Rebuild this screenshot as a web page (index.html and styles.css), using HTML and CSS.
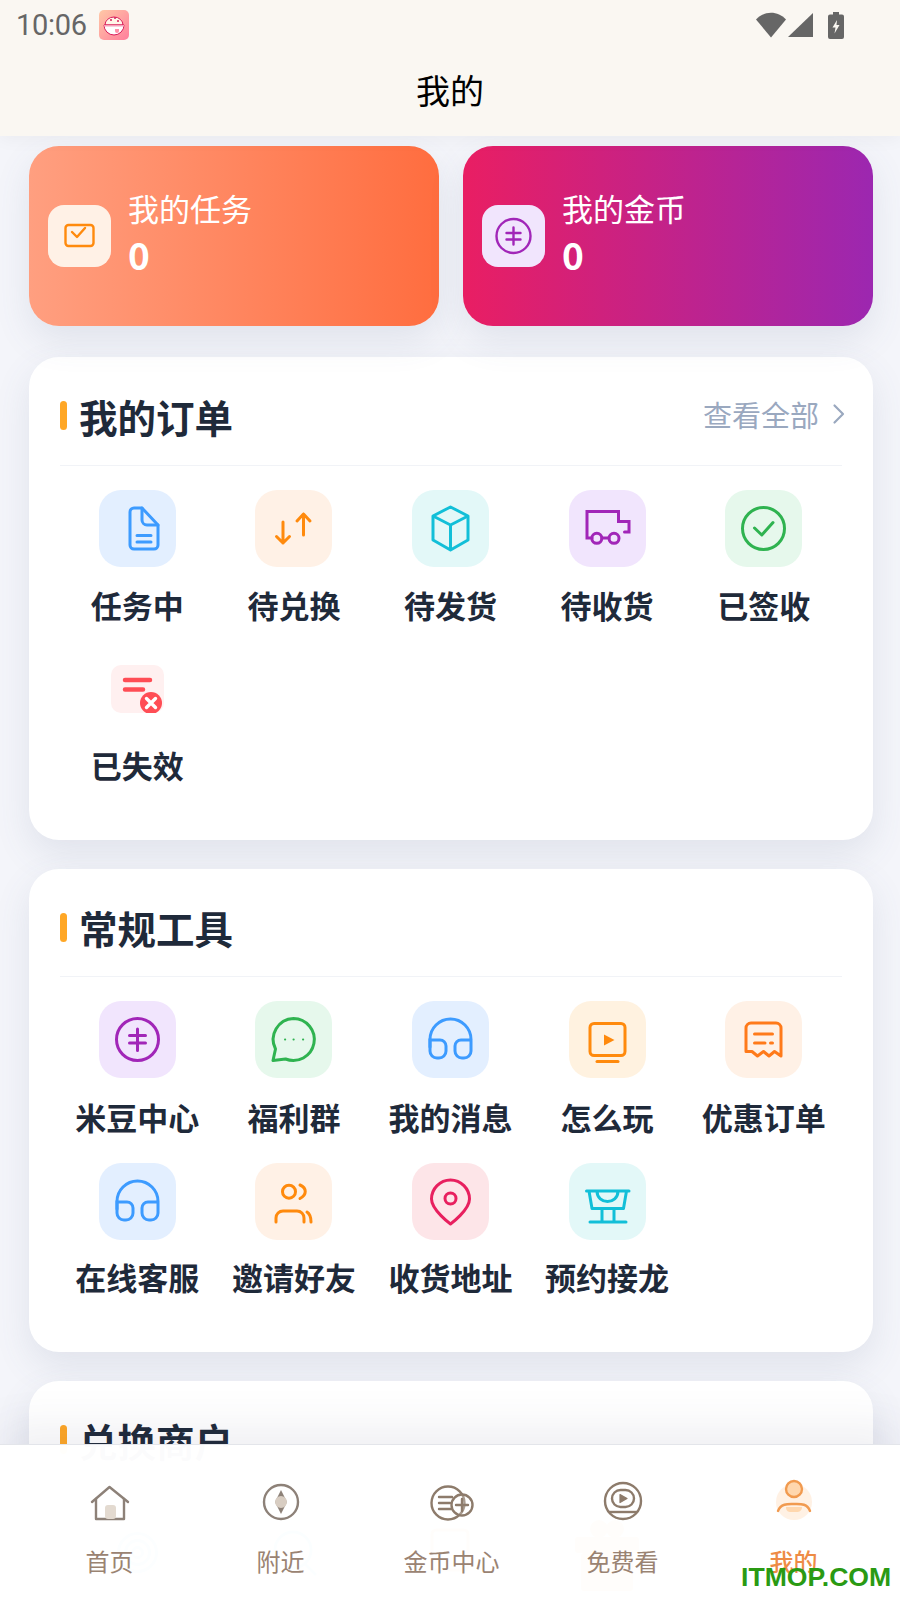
FILE: index.html
```html
<!DOCTYPE html>
<html lang="zh-CN">
<head>
    <meta charset="UTF-8">
    <meta name="viewport" content="width=device-width, initial-scale=1.0">
    <title>我的</title>
    <link rel="stylesheet" href="styles.css">
</head>
<body>
<div class="page">
    <header class="top">
        <div class="status">
            <span class="time">10:06</span>
            <svg class="app-icon" viewBox="0 0 30 30">
                <defs><linearGradient id="rice" x1="0" y1="0" x2="1" y2="1"><stop offset="0" stop-color="#ffc9a6"/><stop offset="1" stop-color="#ff7d9c"/></linearGradient></defs>
                <rect width="30" height="30" rx="5" fill="url(#rice)"/>
                <path d="M6 15a9 8 0 0 1 18 0Z" fill="#fff6e8" stroke="#d81e5b" stroke-width="1"/>
                <path d="M5 15H25a10 10 0 0 1-20 0Z" fill="#fff" stroke="#d81e5b" stroke-width="1"/>
                <rect x="5" y="15" width="20" height="1.5" fill="#f5a0b8"/>
                <path d="M16 19h4v2a2 2 0 0 1-4 0Z" fill="#ff8fa8"/>
                <circle cx="12" cy="10" r="1" fill="#d81e5b"/><circle cx="16" cy="8" r="1" fill="#d81e5b"/><circle cx="19" cy="11" r="1" fill="#d81e5b"/>
            </svg>
            <div class="sys">
                <svg width="30" height="26" viewBox="0 0 30 26"><path d="M0 7.5C8-1.5 22-1.500 30 7.500L15 25.500Z" fill="#666"/></svg>
                <svg width="26" height="26" viewBox="0 0 26 26"><path d="M25 1V25H0Z" fill="#666"/></svg>
                <svg class="batt" width="16" height="27" viewBox="0 0 16 27"><path d="M5 0h6v2.500h3a2 2 0 0 1 2 2V25a2 2 0 0 1-2 2H2a2 2 0 0 1-2-2V4.500a2 2 0 0 1 2-2h3Z" fill="#666"/><path d="M9 8L4.500 15.500H7.500L6.500 21.500L11.500 13H8.500Z" fill="#faf7f2"/></svg>
            </div>
        </div>
        <h1 class="page-title">我的</h1>
    </header>

    <div class="stats">
        <div class="stat stat-task">
            <span class="stat-icon bg-peach">
                <svg width="63" height="62" viewBox="0 0 63 62" fill="none" stroke="#ff8a0d" stroke-width="2.400"><rect x="17.500" y="20" width="28" height="21" rx="3"/><path d="M24 27l5 5 8-9" stroke-linecap="round" stroke-linejoin="round"/></svg>
            </span>
            <div class="stat-text"><span class="stat-name">我的任务</span><b class="stat-num">0</b></div>
        </div>
        <div class="stat stat-coin">
            <span class="stat-icon bg-purple">
                <svg width="63" height="62" viewBox="0 0 63 62" fill="none" stroke="#a126b8" stroke-width="2.400" stroke-linecap="round"><circle cx="31.500" cy="31" r="17"/><path d="M31.500 22.500V39.500M24.500 28H38.500M24.500 34.500H38.500"/></svg>
            </span>
            <div class="stat-text"><span class="stat-name">我的金币</span><b class="stat-num">0</b></div>
        </div>
    </div>

    <section class="card">
        <div class="card-head">
            <h2 class="card-title">我的订单</h2>
            <a class="more">查看全部
                <svg width="14" height="22" viewBox="0 0 14 22" fill="none" stroke="#9aa8bf" stroke-width="2.200" stroke-linecap="round" stroke-linejoin="round"><path d="M2.500 2.500L11 11L2.500 19.500"/></svg>
            </a>
        </div>
        <div class="items items-orders">
            <div class="item">
                <span class="ico bg-blue"><svg viewBox="0 0 77 77" fill="none" stroke="#3d9bff" stroke-linecap="round" stroke-linejoin="round"><path d="M35 18H43L59 35V55a4 4 0 0 1-4 4H35a4 4 0 0 1-4-4V22a4 4 0 0 1 4-4Z"/><path d="M43 18V30a5 5 0 0 0 5 5H59M38 45.500H52M38 52H52"/></svg></span>
                <span class="item-name">任务中</span>
            </div>
            <div class="item">
                <span class="ico bg-peach"><svg viewBox="0 0 77 77" fill="none" stroke="#ff8a0d" stroke-linecap="round" stroke-linejoin="round"><path d="M28 32V53M21.500 46.500L28 53L34.500 46.500M48.500 45V24M42 31L48.500 24L55 31"/></svg></span>
                <span class="item-name">待兑换</span>
            </div>
            <div class="item">
                <span class="ico bg-cyan"><svg viewBox="0 0 77 77" fill="none" stroke="#12bfd8" stroke-linejoin="round"><path d="M38.500 17L56 26V50L38.500 60L21 50V26Z"/><path d="M21 26L38.500 35L56 26M38.500 35V60"/></svg></span>
                <span class="item-name">待发货</span>
            </div>
            <div class="item">
                <span class="ico bg-purple"><svg viewBox="0 0 77 77" fill="none" stroke="#a126b8" stroke-linecap="round"><path d="M23 48H18V21.500H49.500V31.500H60V42H55.500M33 48H40"/><circle cx="27.800" cy="48.300" r="5"/><circle cx="45" cy="48.300" r="5"/></svg></span>
                <span class="item-name">待收货</span>
            </div>
            <div class="item">
                <span class="ico bg-green"><svg viewBox="0 0 77 77" fill="none" stroke="#2fb350" stroke-linecap="round" stroke-linejoin="round"><circle cx="38.500" cy="38.500" r="21"/><path d="M29.500 38L36.800 45L48 32.500"/></svg></span>
                <span class="item-name">已签收</span>
            </div>
            <div class="item">
                <span class="ico"><svg class="ico-small" width="53" height="48" viewBox="0 0 53 48"><rect width="53" height="48" rx="10" fill="#fff0f0"/><path d="M14 15H39M14 24.500H32" stroke="#ff4d55" stroke-width="4.500" stroke-linecap="round"/><circle cx="40" cy="38" r="11" fill="#ff4d55"/><path d="M35.500 33.500L44.500 42.500M44.500 33.500L35.500 42.500" stroke="#fff" stroke-width="3.400" stroke-linecap="round"/></svg></span>
                <span class="item-name">已失效</span>
            </div>
        </div>
    </section>

    <section class="card card-tools">
        <div class="card-head">
            <h2 class="card-title">常规工具</h2>
        </div>
        <div class="items">
            <div class="item">
                <span class="ico bg-purple"><svg viewBox="0 0 77 77" fill="none" stroke="#a126b8" stroke-linecap="round"><circle cx="38.500" cy="38.500" r="21"/><path d="M38.500 28V49.500M30.500 34.500H46.500M30.500 42H46.500"/></svg></span>
                <span class="item-name">米豆中心</span>
            </div>
            <div class="item">
                <span class="ico bg-green"><svg viewBox="0 0 77 77" fill="none" stroke="#2fb350" stroke-linejoin="round"><path d="M38.500 17.500A21 21 0 1 1 30.500 58L18 59.500L20.500 48A21 21 0 0 1 38.500 17.500Z"/><path d="M30 38.500H30.200M38.500 38.500H38.700M48 38.500H48.200" stroke-linecap="round" stroke-width="2"/></svg></span>
                <span class="item-name">福利群</span>
            </div>
            <div class="item">
                <span class="ico bg-blue"><svg viewBox="0 0 77 77" fill="none" stroke="#3d9bff" stroke-linecap="round"><path d="M18 46V38.500a20.500 20.500 0 0 1 41 0V50a7 7 0 0 1-7 7h-2a7 7 0 0 1-7-7V45a6 6 0 0 1 6-6H59"/><path d="M18 39H28a6 6 0 0 1 6 6V50a7 7 0 0 1-7 7H25a7 7 0 0 1-7-7Z"/></svg></span>
                <span class="item-name">我的消息</span>
            </div>
            <div class="item">
                <span class="ico bg-yellow"><svg viewBox="0 0 77 77" fill="none" stroke="#ff8a0d" stroke-linecap="round"><rect x="21" y="22.500" width="35" height="32" rx="4"/><path d="M28 60.500H49"/><path d="M35 33.500L45.500 39L35 44.500Z" fill="#ff8a0d" stroke="none"/></svg></span>
                <span class="item-name">怎么玩</span>
            </div>
            <div class="item">
                <span class="ico bg-peach"><svg viewBox="0 0 77 77" fill="none" stroke="#ff7a1a" stroke-linecap="round" stroke-linejoin="round"><path d="M21 50.500V27a5 5 0 0 1 5-5H51a5 5 0 0 1 5 5V55L49.500 50.500L44 55L38.500 50.500L32.500 55L27 50.500L21 50.500Z"/><path d="M29.500 33H47.500M29.500 42H40M45.500 42H47.500"/></svg></span>
                <span class="item-name">优惠订单</span>
            </div>
            <div class="item">
                <span class="ico bg-blue"><svg viewBox="0 0 77 77" fill="none" stroke="#3d9bff" stroke-linecap="round"><path d="M18 46V38.500a20.500 20.500 0 0 1 41 0V50a7 7 0 0 1-7 7h-2a7 7 0 0 1-7-7V45a6 6 0 0 1 6-6H59"/><path d="M18 39H28a6 6 0 0 1 6 6V50a7 7 0 0 1-7 7H25a7 7 0 0 1-7-7Z"/></svg></span>
                <span class="item-name">在线客服</span>
            </div>
            <div class="item">
                <span class="ico bg-peach"><svg viewBox="0 0 77 77" fill="none" stroke="#ff8a0d" stroke-linecap="round"><circle cx="34" cy="28.700" r="6.500"/><path d="M45 22C52 25 52 32 45 35.500M21 59V55a7 7 0 0 1 7-7H42a7 7 0 0 1 7 7V59M52 49C55 51 56 54 56 59"/></svg></span>
                <span class="item-name">邀请好友</span>
            </div>
            <div class="item">
                <span class="ico bg-rose"><svg viewBox="0 0 77 77" fill="none" stroke="#e8205f" stroke-linejoin="round"><path d="M38.500 61C38.500 61 19.500 47 19.500 36A19 19 0 0 1 57.500 36C57.500 47 38.500 61 38.500 61Z"/><circle cx="38.500" cy="35.500" r="5.500"/></svg></span>
                <span class="item-name">收货地址</span>
            </div>
            <div class="item">
                <span class="ico bg-cyan"><svg viewBox="0 0 77 77" fill="none" stroke="#12bfd8" stroke-linecap="round" stroke-linejoin="round"><path d="M17.500 28H60M20 28L23 45.500H54.500L57.500 28M28 28C28 42 49 42 49 28M33 45.500V59M45 45.500V59M21 59H57"/></svg></span>
                <span class="item-name">预约接龙</span>
            </div>
        </div>
    </section>

    <section class="card">
        <div class="card-head">
            <h2 class="card-title">兑换商户</h2>
        </div>
        <div class="items">
            <div class="item">
                <span class="ico"><svg viewBox="0 0 77 77" fill="none" stroke="#3d9bff"><circle cx="38.500" cy="38.500" r="19"/><circle cx="38.500" cy="38.500" r="12"/><circle cx="38.500" cy="38.500" r="5"/></svg></span>
            </div>
            <div class="item">
                <span class="ico"><svg viewBox="0 0 77 77" fill="none" stroke="#12bfd8"><circle cx="38" cy="36" r="18"/><path d="M50 50L61 61"/></svg></span>
            </div>
            <div class="item">
                <span class="ico"><svg viewBox="0 0 77 77" fill="none" stroke="#ff8a0d"><rect x="20" y="16" width="36" height="40" rx="4"/></svg></span>
            </div>
            <div class="item">
                <span class="ico"><svg class="ico-solid" viewBox="0 0 77 77" fill="#ff8a0d"><rect x="6" y="23" width="64" height="16" rx="3"/><rect x="12" y="39" width="52" height="38" rx="3"/><circle cx="30" cy="15" r="9"/><circle cx="46" cy="15" r="9"/></svg></span>
            </div>
        </div>
    </section>
</div>

<nav class="tabbar">
    <div class="tab">
        <svg width="40" height="36" viewBox="0 0 40 36" fill="none" stroke="#8d8178" stroke-width="2.400" stroke-linejoin="round" stroke-linecap="round"><path d="M2 17L19.500 2L38 17"/><path d="M6 14V34H34V14"/><rect x="15" y="20" width="11" height="14" rx="3" fill="#e3dad0" stroke="none"/></svg>
        <span>首页</span>
    </div>
    <div class="tab">
        <svg width="38" height="38" viewBox="0 0 38 38" fill="none" stroke="#8d8178" stroke-width="2.400"><circle cx="19" cy="19" r="17"/><path d="M19 7L25 19L19 31L13 19Z" fill="#8d8178" stroke="none"/><circle cx="19" cy="19" r="4.800" fill="#d8cdc2" stroke="#d8cdc2"/></svg>
        <span>附近</span>
    </div>
    <div class="tab">
        <svg width="44" height="36" viewBox="0 0 44 36" fill="none" stroke="#8d7b6b" stroke-width="2.400" stroke-linecap="round"><circle cx="18" cy="18" r="16.500"/><path d="M9 12H22M9 18H20M9 24H22"/><circle cx="32" cy="20" r="10.500" fill="#fff" fill-opacity=".25"/><path d="M32 14V26M26 20H38"/></svg>
        <span>金币中心</span>
    </div>
    <div class="tab">
        <svg width="40" height="40" viewBox="0 0 40 40" fill="none" stroke="#8d7b6b" stroke-width="2.400"><circle cx="20" cy="20" r="18"/><rect x="9" y="9" width="22" height="17" rx="8.500"/><path d="M17 13.500L24 17.500L17 21.500Z" fill="#8d7b6b" stroke="#8d7b6b" stroke-width="1.200" stroke-linejoin="round"/><path d="M6 31H34"/></svg>
        <span>免费看</span>
    </div>
    <div class="tab tab-on">
        <svg width="38" height="42" viewBox="0 0 38 42" fill="none"><circle cx="19" cy="23" r="18" fill="#fff1e4"/><path d="M11 28H27C27 32 24 33 22 33H16C13 33 11 32 11 28Z" fill="#ffd7ae"/><circle cx="19" cy="10" r="8" fill="#ffd7ae" stroke="#f19a4f" stroke-width="2.400"/><path d="M3 32C6 24 14 25 19 25C25 25 32 24 35 32" stroke="#f19a4f" stroke-width="2.400" stroke-linecap="round"/></svg>
        <span>我的</span>
    </div>
</nav>
<div class="watermark">ITMOP.COM</div>
</body>
</html>
```

FILE: styles.css
```css
* {
    box-sizing: border-box;
}
html, body {
    margin: 0;
    height: 1600px;
    overflow: hidden;
}
body {
    position: relative;
    background: #f4f5fa;
    font-family: "Noto Sans CJK SC", "Noto Sans", sans-serif;
    color: #1f2a3a;
}
.page {
    height: 1600px;
    overflow: hidden;
}

/* top */
.top {
    height: 136px;
    background: #faf7f2;
    position: relative;
    z-index: 2;
    box-shadow: 0 4px 16px rgba(0, 0, 0, .04);
}
.status {
    height: 50px;
    display: flex;
    align-items: center;
    padding: 0 56px 0 16px;
}
.time {
    font-family: Roboto, sans-serif;
    font-size: 29px;
    color: #666;
    letter-spacing: -0.3px;
}
.app-icon {
    width: 30px;
    height: 30px;
    margin-left: 12px;
}
.sys {
    margin-left: auto;
    display: flex;
    align-items: center;
    gap: 2px;
}
.batt {
    margin-left: 12px;
}
.page-title {
    margin: 0;
    text-align: center;
    font-size: 34px;
    font-weight: 400;
    line-height: 80px;
    color: #000;
}

/* two stat cards */
.stats {
    display: flex;
    gap: 24px;
    padding: 10px 27px 0 29px;
}
.stat {
    flex: 1;
    height: 180px;
    border-radius: 30px;
    padding-left: 19px;
    display: flex;
    align-items: center;
    gap: 17px;
    color: #fff;
    box-shadow: 0 14px 36px rgba(80, 95, 130, .12);
}
.stat-task {
    background: linear-gradient(90deg, #ff9f80, #ff6d3f);
}
.stat-coin {
    background: linear-gradient(90deg, #e91e63, #9c27b0);
}
.stat-icon {
    width: 63px;
    height: 62px;
    border-radius: 16px;
    display: block;
}
.stat-text {
    display: flex;
    flex-direction: column;
    margin-bottom: 9px;
}
.stat-name {
    font-size: 31px;
    line-height: 46px;
}
.stat-num {
    font-size: 37px;
    line-height: 47px;
}

/* cards */
.card {
    margin: 29px 27px 0 29px;
    background: #fff;
    border-radius: 30px;
    padding: 0 31px 55px;
    box-shadow: 0 14px 36px rgba(80, 95, 130, .12);
}
.stats + .card {
    margin-top: 31px;
}
.card-head {
    height: 109px;
    padding-bottom: 1px;
    display: flex;
    align-items: center;
    justify-content: space-between;
    border-bottom: 1px solid #f1f3f7;
}
.card-tools .card-head {
    height: 108px;
}
.card-title {
    margin: 10px 0 0;
    font-size: 38.5px;
    font-weight: 700;
    line-height: 50px;
    color: #1f2a3a;
    display: flex;
    align-items: center;
    gap: 12px;
}
.card-title::before {
    content: "";
    width: 7px;
    height: 29px;
    border-radius: 4px;
    background: #ffa726;
}
.more {
    margin: 6px -4px 0 0;
    display: flex;
    align-items: center;
    gap: 13px;
    font-size: 29px;
    color: #9aa8bf;
}
.items {
    display: grid;
    grid-template-columns: repeat(5, 1fr);
    row-gap: 25px;
    margin-left: -1px;
    padding-top: 24px;
}
.card-tools .items {
    row-gap: 26px;
}
.item {
    display: flex;
    flex-direction: column;
    align-items: center;
    min-width: 0;
}
.ico {
    width: 77px;
    height: 77px;
    border-radius: 22px;
    display: flex;
    align-items: center;
    justify-content: center;
}
.ico svg {
    width: 77px;
    height: 77px;
    stroke-width: 3px;
}
.ico .ico-small {
    width: 53px;
    height: 48px;
}
.ico .ico-solid {
    stroke: none;
}
.item-name {
    margin-top: 18px;
    font-size: 31px;
    font-weight: 700;
    line-height: 40px;
    white-space: nowrap;
    color: #1f2a3a;
}
.card-tools .item:nth-child(-n+5) .item-name {
    margin-top: 19px;
}
.card-tools .item:nth-child(n+6) .item-name {
    margin-top: 17px;
}
.bg-blue { background: #e3efff; }
.bg-peach { background: #fff1e6; }
.bg-cyan { background: #e3f8f8; }
.bg-purple { background: #f1e5fd; }
.bg-green { background: #e6f8ec; }
.bg-yellow { background: #fff2e0; }
.bg-rose { background: #fde5e8; }

/* bottom tabs lie over the page */
.tabbar {
    position: absolute;
    left: 0;
    right: 0;
    top: 1444px;
    height: 156px;
    display: grid;
    grid-template-columns: repeat(5, 171px);
    padding-left: 24px;
    background: rgba(255, 255, 255, .985);
    border-top: 1px solid #e3e5ea;
    box-shadow: 0 -18px 40px rgba(60, 70, 100, .08);
    z-index: 3;
}
.tab {
    display: flex;
    flex-direction: column;
    align-items: center;
    justify-content: flex-end;
    height: 133px;
    font-size: 24px;
    line-height: 34px;
    color: #9a8372;
}
.tab svg {
    margin-bottom: 23px;
}
.tab-on {
    color: #ee8b45;
    font-weight: 500;
}
.watermark {
    position: absolute;
    left: 741px;
    top: 1560px;
    z-index: 4;
    font-family: "Liberation Sans", sans-serif;
    font-size: 26.6px;
    font-weight: 700;
    line-height: 34px;
    color: #2a9a13;
}
```
